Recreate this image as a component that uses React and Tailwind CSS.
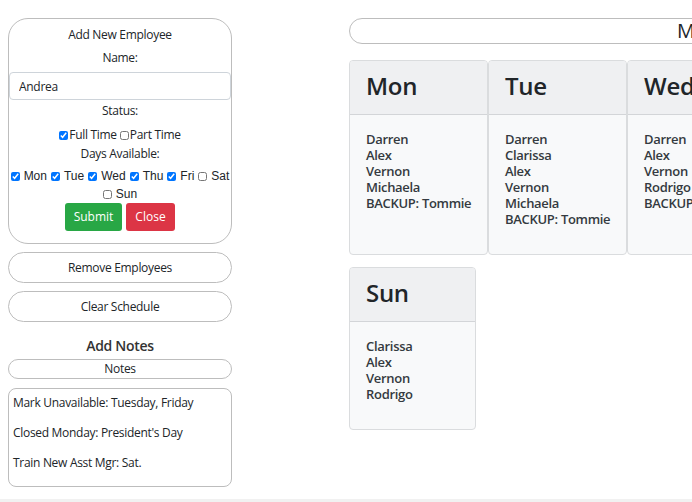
import { useState } from 'react';

const font = { fontFamily: '"Open Sans", "Noto Sans", sans-serif' };
const arial = { fontFamily: '"Liberation Sans", Arial, sans-serif' };

const schedule = [
  { day: 'Mon', names: ['Darren', 'Alex', 'Vernon', 'Michaela', 'BACKUP: Tommie'] },
  { day: 'Tue', names: ['Darren', 'Clarissa', 'Alex', 'Vernon', 'Michaela', 'BACKUP: Tommie'] },
  { day: 'Wed', names: ['Darren', 'Alex', 'Vernon', 'Rodrigo', 'BACKUP: Tommie'] },
  { day: 'Thu', names: ['Darren', 'Clarissa', 'Alex', 'Vernon', 'BACKUP: Tommie'] },
  { day: 'Fri', names: ['Darren', 'Alex', 'Michaela', 'Rodrigo', 'BACKUP: Tommie'] },
  { day: 'Sat', names: ['Clarissa', 'Vernon', 'Rodrigo', 'BACKUP: Tommie'] },
];

const sunday = { day: 'Sun', names: ['Clarissa', 'Alex', 'Vernon', 'Rodrigo'] };

function DayCard({ day, names, width }) {
  return (
    <div className={`${width} shrink-0 flex flex-col border border-[#dadcde] rounded-[4px] bg-[#f8f9fa] overflow-hidden`}>
      <div className="h-[54px] bg-[#eff0f2] border-b border-[#d3d5d8] pl-[16px] pb-[4px] flex items-center">
        <span className="text-[24px] leading-none font-semibold tracking-[-0.3px] text-[#212529]" style={font}>{day}</span>
      </div>
      <div className="pl-[16px] pt-[16px] pb-[27px] text-[13px] leading-[16px] font-semibold tracking-[-0.3px] text-[#343a40]" style={font}>
        {names.map((n, i) => <div key={i} className="whitespace-nowrap">{n}</div>)}
      </div>
    </div>
  );
}

export default function App() {
  const [name, setName] = useState('Andrea');
  const [full, setFull] = useState(true);
  const [part, setPart] = useState(false);
  const [days, setDays] = useState({ Mon: true, Tue: true, Wed: true, Thu: true, Fri: true, Sat: false, Sun: false });
  const toggle = (d) => setDays(p => ({ ...p, [d]: !p[d] }));

  const dayBox = (d) => (
    <label key={d} className="inline-flex items-center cursor-pointer ml-[4px] first:ml-0">
      <input type="checkbox" checked={days[d]} onChange={() => toggle(d)} className="w-[9px] h-[9px] mr-[4px] accent-[#0075ff]" />
      <span>{d}</span>
    </label>
  );

  return (
    <div className="w-[692px] h-[502px] overflow-hidden bg-white relative text-[#212529]" style={font}>
      <div className="flex">
        {/* Colonne gauche */}
        <div className="ml-[8px] w-[224px] shrink-0 pt-[18px] flex flex-col">
          <div className="border border-[#bdbdbd] rounded-[20px] pt-[7px] pb-[12px] flex flex-col items-center text-[12px] leading-[18px] tracking-[-0.3px]">
            <div>Add New Employee</div>
            <div className="mt-[5px]">Name:</div>
            <input value={name} onChange={e => setName(e.target.value)}
              className="mt-[5px] w-full h-[28px] border border-[#ced4da] rounded-[4px] pl-[9px] text-[12px] outline-none" style={font} />
            <div className="mt-[2px]">Status:</div>
            <div className="mt-[6px] flex items-center">
              <label className="inline-flex items-center">
                <input type="checkbox" checked={full} onChange={() => setFull(!full)} className="w-[9px] h-[9px] mr-[1px] accent-[#0075ff]" />
                <span>Full Time</span>
              </label>
              <label className="inline-flex items-center ml-[3px]">
                <input type="checkbox" checked={part} onChange={() => setPart(!part)} className="w-[9px] h-[9px] mr-[1px] accent-[#0075ff]" />
                <span>Part Time</span>
              </label>
            </div>
            <div className="mt-[1px]">Days Available:</div>
            <div className="mt-[4px] flex items-center justify-center text-[12px] tracking-normal" style={arial}>
              {['Mon', 'Tue', 'Wed', 'Thu', 'Fri', 'Sat'].map(dayBox)}
            </div>
            <div className="flex items-center justify-center text-[12px] tracking-normal" style={arial}>
              {dayBox('Sun')}
            </div>
            <div className="flex gap-[4px] tracking-normal">
              <button className="h-[28px] w-[57px] bg-[#28a745] text-white text-[12px] rounded-[3px]">Submit</button>
              <button className="h-[28px] w-[49px] bg-[#dc3545] text-white text-[12px] rounded-[3px]">Close</button>
            </div>
          </div>

          <button className="mt-[8px] h-[31px] w-full border border-[#bdbdbd] rounded-full text-[12px] tracking-[-0.3px] text-[#212529]">Remove Employees</button>
          <button className="mt-[8px] h-[31px] w-full border border-[#bdbdbd] rounded-full text-[12px] tracking-[-0.3px] text-[#212529]">Clear Schedule</button>

          <div className="mt-[14px] text-center text-[14px] leading-[20px] font-semibold tracking-[-0.3px] text-[#333]">Add Notes</div>
          <button className="mt-[3px] h-[20px] w-full border border-[#bdbdbd] rounded-full text-[12px] leading-none tracking-[-0.3px] text-[#212529]">Notes</button>
          <div className="mt-[9px] h-[99px] border border-[#bdbdbd] rounded-[8px] pl-[4px] pt-[5px] text-[12px] leading-[18px] tracking-[-0.3px] text-[#212529]">
            <div>Mark Unavailable: Tuesday, Friday</div>
            <div className="mt-[12px]">Closed Monday: President's Day</div>
            <div className="mt-[12px]">Train New Asst Mgr: Sat.</div>
          </div>
        </div>

        {/* Planning */}
        <div className="ml-[117px] pt-[18px] flex flex-col shrink-0">
          <div className="w-[700px] h-[26px] border border-[#bdbdbd] rounded-full flex items-center pl-[327px]">
            <span className="text-[20px] leading-none text-[#212529] whitespace-nowrap">Master Schedule</span>
          </div>
          <div className="mt-[16px] flex">
            {schedule.map(s => <DayCard key={s.day} {...s} width="w-[139px]" />)}
          </div>
          <div className="mt-[12px] flex">
            <DayCard {...sunday} width="w-[127px]" />
          </div>
        </div>
      </div>
      <div className="absolute left-0 right-0 bottom-0 h-[3px] bg-[#f1f1f1]" />
    </div>
  );
}
